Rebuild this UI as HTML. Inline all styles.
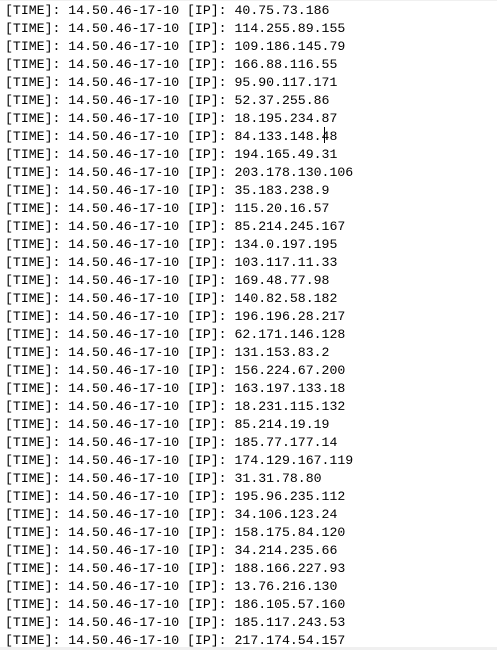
<!DOCTYPE html>
<html><head><style>
html,body{margin:0;padding:0;background:#fff;width:497px;height:650px;overflow:hidden}
pre{margin:0;padding:2px 0 0 5px;font-family:"Liberation Mono",monospace;font-size:13.2px;line-height:18px;color:#000}
.t{position:absolute;left:0;top:0;width:497px;height:1px;background:#f0f0f0}
.b{position:absolute;left:0;top:647px;width:497px;height:3px;background:#f0f0f0}
.c{position:absolute;left:324px;top:127px;width:1px;height:16px;background:#000}
</style></head><body>
<pre>[TIME]: 14.50.46-17-10 [IP]: 40.75.73.186
[TIME]: 14.50.46-17-10 [IP]: 114.255.89.155
[TIME]: 14.50.46-17-10 [IP]: 109.186.145.79
[TIME]: 14.50.46-17-10 [IP]: 166.88.116.55
[TIME]: 14.50.46-17-10 [IP]: 95.90.117.171
[TIME]: 14.50.46-17-10 [IP]: 52.37.255.86
[TIME]: 14.50.46-17-10 [IP]: 18.195.234.87
[TIME]: 14.50.46-17-10 [IP]: 84.133.148.48
[TIME]: 14.50.46-17-10 [IP]: 194.165.49.31
[TIME]: 14.50.46-17-10 [IP]: 203.178.130.106
[TIME]: 14.50.46-17-10 [IP]: 35.183.238.9
[TIME]: 14.50.46-17-10 [IP]: 115.20.16.57
[TIME]: 14.50.46-17-10 [IP]: 85.214.245.167
[TIME]: 14.50.46-17-10 [IP]: 134.0.197.195
[TIME]: 14.50.46-17-10 [IP]: 103.117.11.33
[TIME]: 14.50.46-17-10 [IP]: 169.48.77.98
[TIME]: 14.50.46-17-10 [IP]: 140.82.58.182
[TIME]: 14.50.46-17-10 [IP]: 196.196.28.217
[TIME]: 14.50.46-17-10 [IP]: 62.171.146.128
[TIME]: 14.50.46-17-10 [IP]: 131.153.83.2
[TIME]: 14.50.46-17-10 [IP]: 156.224.67.200
[TIME]: 14.50.46-17-10 [IP]: 163.197.133.18
[TIME]: 14.50.46-17-10 [IP]: 18.231.115.132
[TIME]: 14.50.46-17-10 [IP]: 85.214.19.19
[TIME]: 14.50.46-17-10 [IP]: 185.77.177.14
[TIME]: 14.50.46-17-10 [IP]: 174.129.167.119
[TIME]: 14.50.46-17-10 [IP]: 31.31.78.80
[TIME]: 14.50.46-17-10 [IP]: 195.96.235.112
[TIME]: 14.50.46-17-10 [IP]: 34.106.123.24
[TIME]: 14.50.46-17-10 [IP]: 158.175.84.120
[TIME]: 14.50.46-17-10 [IP]: 34.214.235.66
[TIME]: 14.50.46-17-10 [IP]: 188.166.227.93
[TIME]: 14.50.46-17-10 [IP]: 13.76.216.130
[TIME]: 14.50.46-17-10 [IP]: 186.105.57.160
[TIME]: 14.50.46-17-10 [IP]: 185.117.243.53
[TIME]: 14.50.46-17-10 [IP]: 217.174.54.157</pre>
<div class="c"></div><div class="t"></div><div class="b"></div>
</body></html>
